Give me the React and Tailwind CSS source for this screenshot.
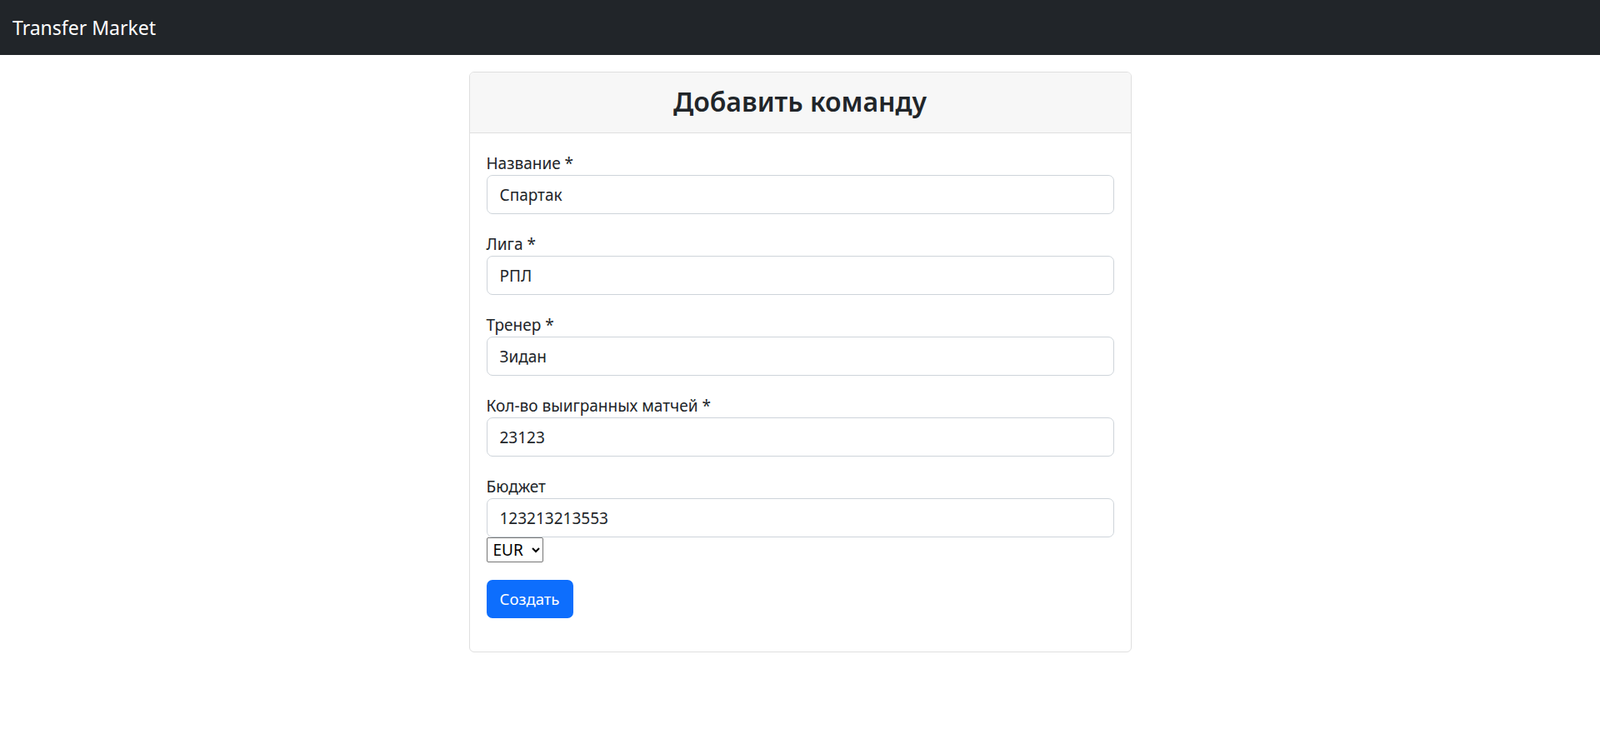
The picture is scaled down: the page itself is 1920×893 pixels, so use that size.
import React from "react";

const fields = [
  { label: "Название *", value: "Спартак" },
  { label: "Лига *", value: "РПЛ" },
  { label: "Тренер *", value: "Зидан" },
  { label: "Кол-во выигранных матчей *", value: "23123" },
];

export default function App() {
  return (
    <div className="min-h-[893px] bg-white text-[#212529]" style={{ fontFamily: '"Noto Sans", "Open Sans", sans-serif' }}>
      <nav className="h-[66px] bg-[#212529] flex items-center px-[15px]">
        <span className="text-white text-[23px] leading-[38px]">Transfer Market</span>
      </nav>
      <div className="pt-[20px]">
        <div className="w-[795px] mx-auto border border-[#dfdfdf] rounded-[6px] overflow-hidden">
          <div className="h-[73px] bg-[#f7f7f7] border-b border-[#dfdfdf] flex items-center justify-center">
            <h2 className="text-[32px] font-semibold leading-[48px] mt-[-2px]">Добавить команду</h2>
          </div>
          <div className="p-[20px]">
            {fields.map((f) => (
              <div key={f.label} className="mb-[20px]">
                <label className="block text-[19px] leading-[30px] pt-[1px]">{f.label}</label>
                <input
                  readOnly
                  value={f.value}
                  className="block w-full h-[47px] mt-[-1px] border border-[#ced4da] rounded-[7px] px-[15px] text-[19px] text-[#212529] outline-none"
                />
              </div>
            ))}
            <div>
              <label className="block text-[19px] leading-[30px] pt-[1px]">Бюджет</label>
              <input
                readOnly
                value="123213213553"
                className="block w-full h-[47px] mt-[-1px] border border-[#ced4da] rounded-[7px] px-[15px] text-[19px] text-[#212529] outline-none"
              />
              <select className="block h-[30px] w-[68px] border border-[#767676] rounded-[2px] bg-white text-[19px] text-black pl-[3px]">
                <option>EUR</option>
              </select>
            </div>
            <button className="mt-[21px] mb-[20px] h-[46px] w-[104px] bg-[#0d6efd] text-white rounded-[7px] text-[18.5px]">
              Создать
            </button>
          </div>
        </div>
      </div>
    </div>
  );
}
